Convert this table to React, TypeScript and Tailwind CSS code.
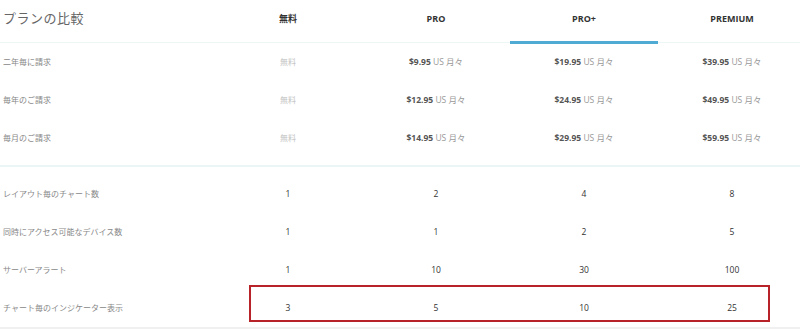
import React from 'react'

const font = { fontFamily: '"Open Sans", "Noto Sans CJK JP", sans-serif' }

const plans = ['無料', 'PRO', 'PRO+', 'PREMIUM']

const prices = [
  { label: '二年毎に請求', values: ['$9.95', '$19.95', '$39.95'] },
  { label: '毎年のご請求', values: ['$12.95', '$24.95', '$49.95'] },
  { label: '毎月のご請求', values: ['$14.95', '$29.95', '$59.95'] },
]

const features = [
  { label: 'レイアウト毎のチャート数', values: ['1', '2', '4', '8'] },
  { label: '同時にアクセス可能なデバイス数', values: ['1', '1', '2', '5'] },
  { label: 'サーバーアラート', values: ['1', '10', '30', '100'] },
  { label: 'チャート毎のインジケーター表示', values: ['3', '5', '10', '25'] },
]

const cols = 'grid grid-cols-[214px_148px_148px_148px_148px]'

export default function App() {
  return (
    <div className="w-[800px] h-[329px] overflow-hidden bg-white" style={font}>
      <div className="w-[806px]">
        {/* header */}
        <div className={`${cols} h-[43px] border-b border-[#eef5f5]`}>
          <div className="flex items-center pl-[3px] pb-[4px] text-[13px] text-[#666] tracking-[0.5px]">
            プランの比較
          </div>
          {plans.map((p) => (
            <div
              key={p}
              className={`relative flex items-center justify-center pb-[4px] text-[9px] font-bold text-[#333] ${
                p === 'PRO+' ? 'after:absolute after:left-0 after:right-0 after:bottom-[-2px] after:h-[3px] after:bg-[#4fabd3]' : ''
              }`}
            >
              {p}
            </div>
          ))}
        </div>

        {/* prices */}
        <div className="border-b-2 border-[#ebf5f5] pb-[8px]">
          {prices.map((r) => (
            <div key={r.label} className={`${cols} h-[38px] items-center`}>
              <div className="pl-[3px] text-[8px] text-[#888]">{r.label}</div>
              <div className="text-center text-[8px] text-[#c4c4c4]">無料</div>
              {r.values.map((v) => (
                <div key={v} className="text-center text-[8.5px]">
                  <span className="font-bold text-[#555]">{v}</span>
                  <span className="text-[#999]"> US 月々</span>
                </div>
              ))}
            </div>
          ))}
        </div>

        {/* features */}
        <div className="pt-[8px] border-b-[3px] border-[#f0f0f0]">
          {features.map((r, i) => (
            <div key={r.label} className={`${cols} relative h-[38px] items-center`}>
              <div className="pl-[3px] text-[8px] text-[#888]">{r.label}</div>
              {r.values.map((v, j) => (
                <div key={j} className="text-center text-[8.5px] text-[#333]">
                  {v}
                </div>
              ))}
              {i === features.length - 1 && (
                <div className="absolute left-[249px] top-[-4px] w-[521px] h-[37px] border-2 border-[#b8232a]" />
              )}
            </div>
          ))}
        </div>
      </div>
    </div>
  )
}
